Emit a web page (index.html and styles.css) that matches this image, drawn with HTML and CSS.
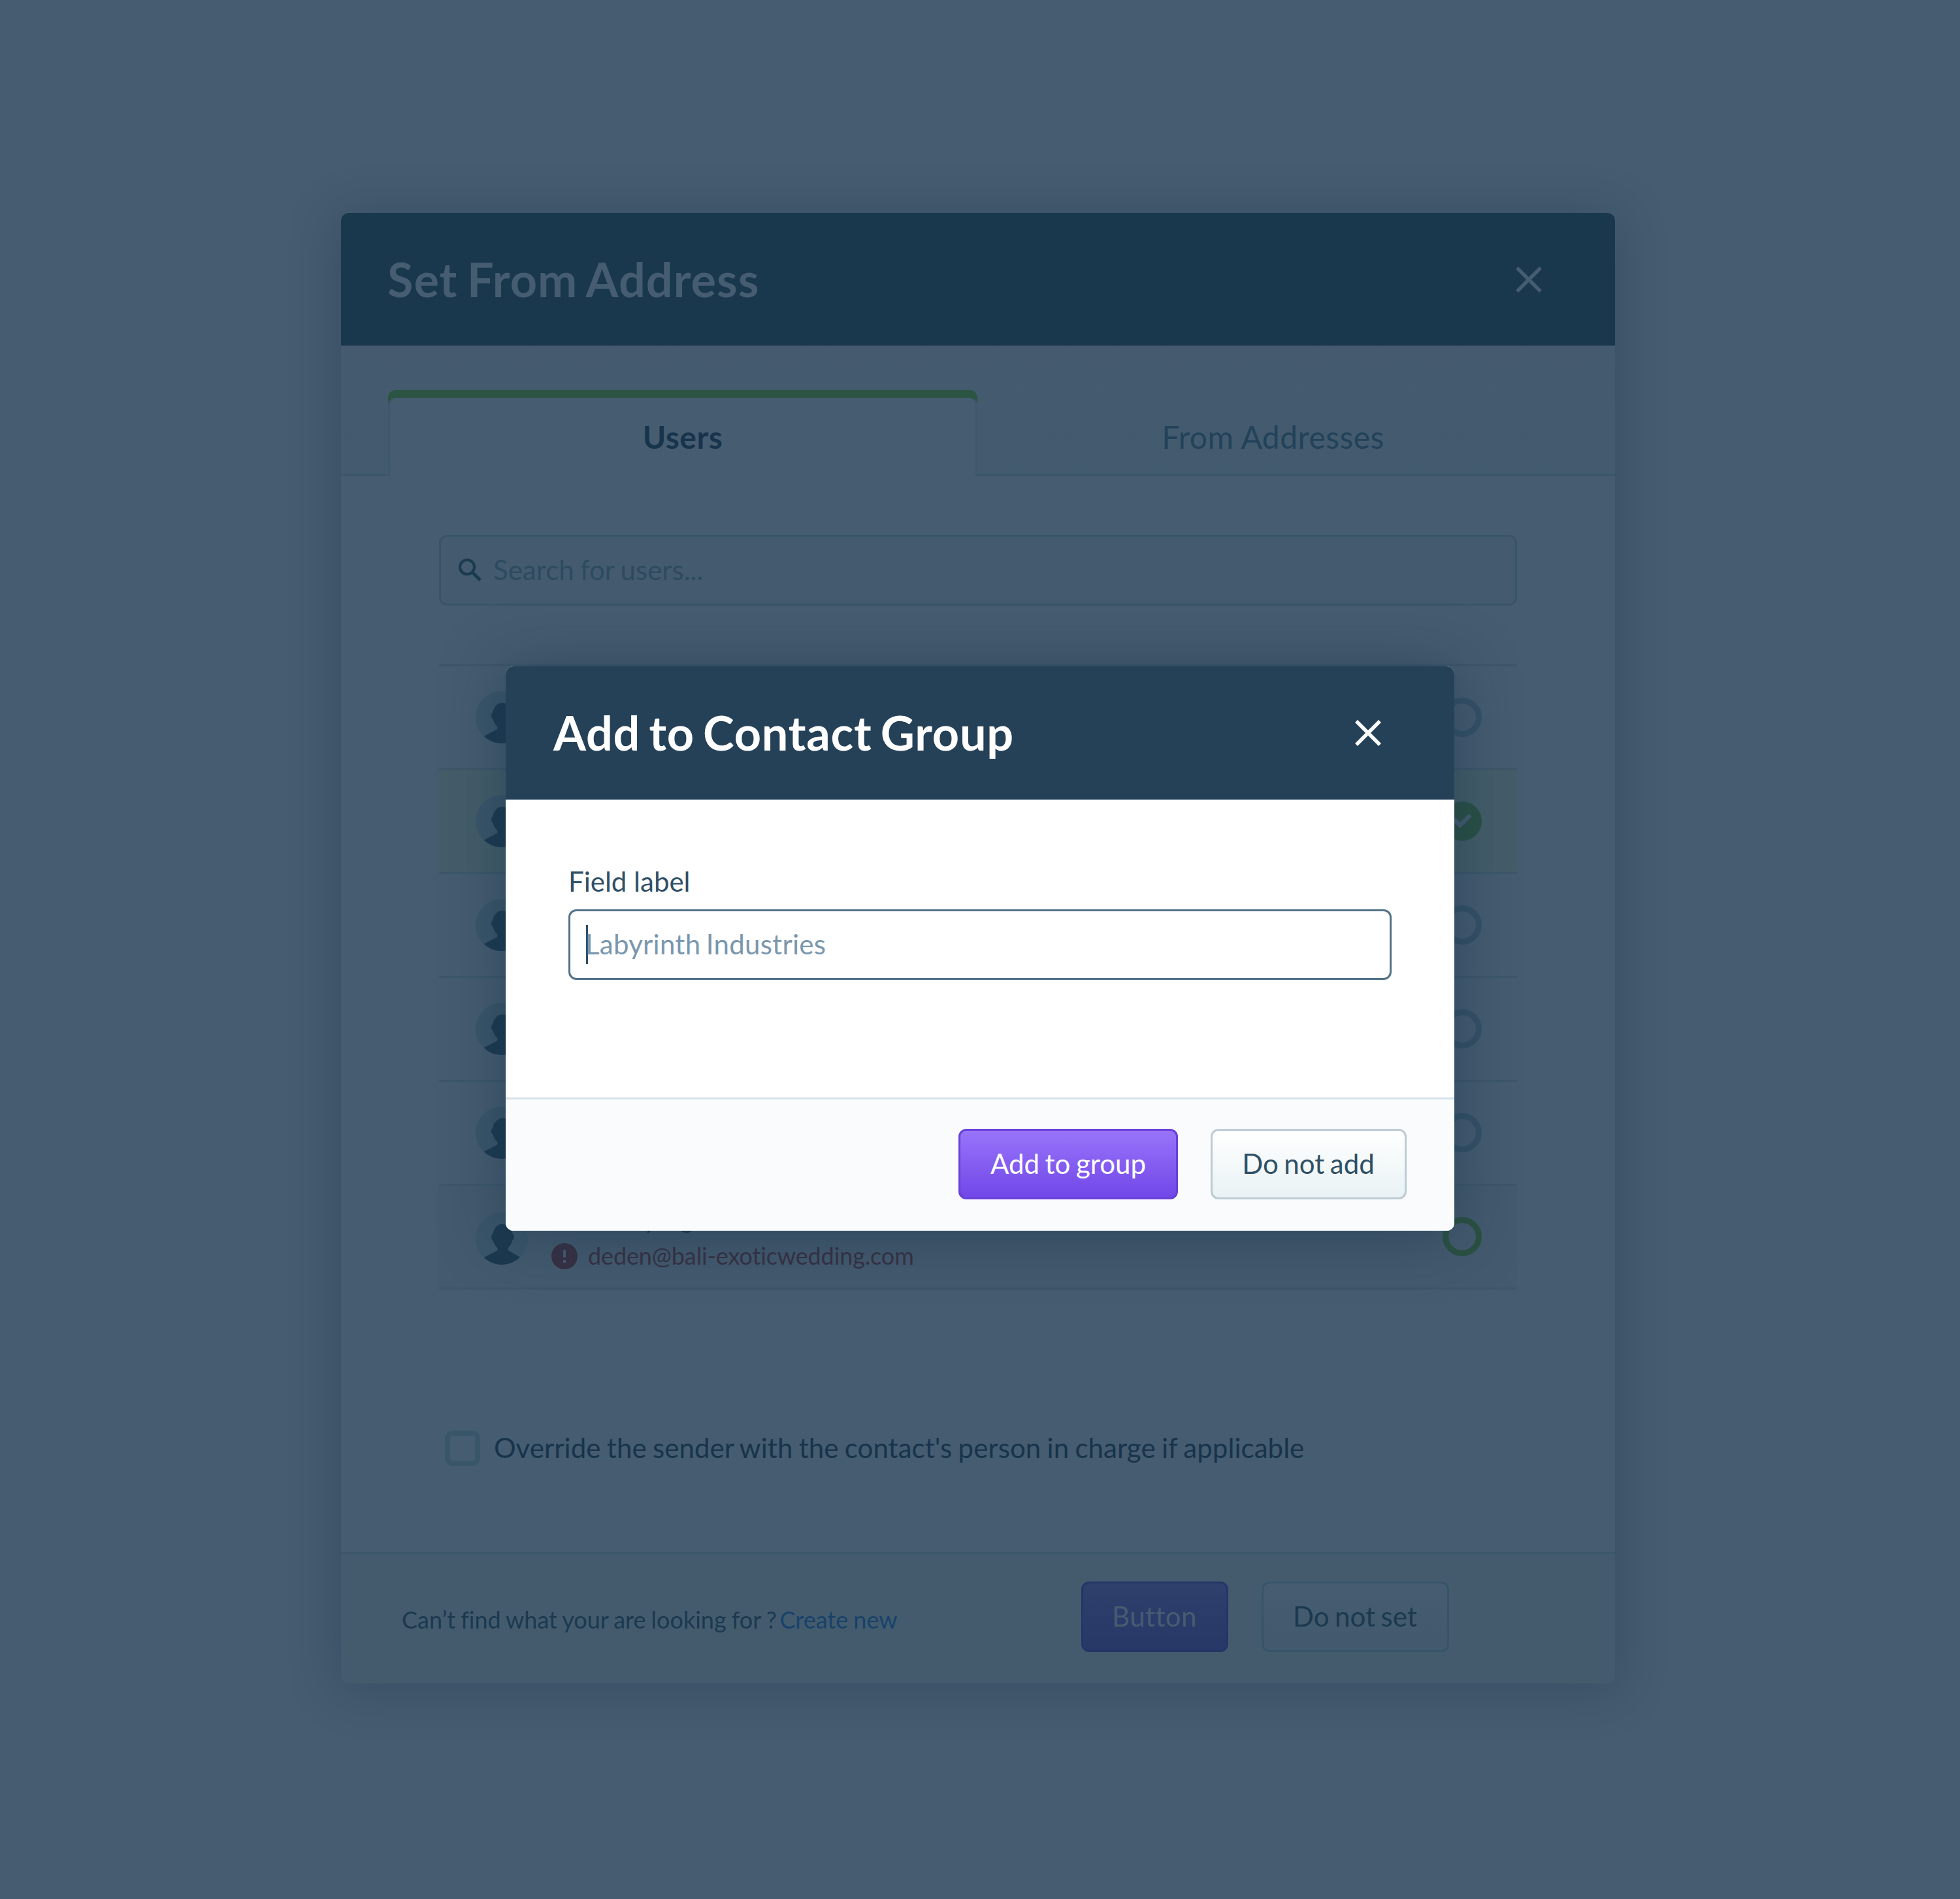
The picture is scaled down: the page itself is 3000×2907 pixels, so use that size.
FILE: index.html
```html
<!DOCTYPE html>
<html lang="en">
<head>
<meta charset="utf-8">
<title>Add to Contact Group</title>
<link rel="stylesheet" href="styles.css">
</head>
<body>
<svg width="0" height="0" class="defs">
  <symbol id="avatar" viewBox="0 0 80 80">
    <clipPath id="disc"><circle cx="40" cy="40" r="40"/></clipPath>
    <circle cx="40" cy="40" r="40" fill="#3b566a"/>
    <path clip-path="url(#disc)" fill="#1b394f" d="M41 18C33 18 28 24 26.500 32C25.500 34 24 34 24 37C24 40 25 42 26.500 43C28 48 30 51 33 54C34 55.500 34 58 32 59L12.500 69V82H69V69L51.500 59C49 58 49 55.500 50 54C53 51 55 48 56 43C58 42 59 40 59 37C59 34 57.500 34 56.500 32C55 24 49 18 41 18Z"/>
  </symbol>
  <symbol id="close" viewBox="0 0 40 40">
    <path d="M2 2L38 38M38 2L2 38" fill="none" stroke="currentColor" stroke-width="5.500"/>
  </symbol>
</svg>

<section class="modal users">
  <header class="modal-head">
    <h2>Set From Address</h2>
    <svg class="close"><use href="#close"/></svg>
  </header>
  <nav class="tabs">
    <div class="tab active"><div class="tab-in">Users</div></div>
    <div class="tab">From Addresses</div>
  </nav>
  <div class="users-body">
    <div class="search">
      <svg class="glass" viewBox="0 0 35 35"><circle cx="13" cy="13" r="11" fill="none" stroke="#1b394f" stroke-width="4.200"/><path d="M21.500 21.500L33 33" stroke="#1b394f" stroke-width="5"/></svg>
      <span>Search for users...</span>
    </div>
    <ul class="list">
      <li><svg class="avatar"><use href="#avatar"/></svg><i class="radio"></i></li>
      <li class="selected"><svg class="avatar"><use href="#avatar"/></svg>
        <svg class="checked" viewBox="0 0 60 60"><circle cx="30" cy="30" r="30" fill="#2a5043"/><path d="M17.500 27.300L26.700 36.500L42.500 20.700" fill="none" stroke="#465c70" stroke-width="6.500"/></svg></li>
      <li><svg class="avatar"><use href="#avatar"/></svg><i class="radio"></i></li>
      <li><svg class="avatar"><use href="#avatar"/></svg><i class="radio"></i></li>
      <li><svg class="avatar"><use href="#avatar"/></svg><i class="radio"></i></li>
      <li class="last"><svg class="avatar"><use href="#avatar"/></svg>
        <div class="person">
          <div class="name">Deden Jying</div>
          <div class="mail">
            <svg class="alert" viewBox="0 0 40 40"><circle cx="20" cy="20" r="20" fill="#383043"/><path d="M18 10H22V22H18ZM18 26H22V30H18Z" fill="#465c70"/></svg>
            <span>deden@bali-exoticwedding.com</span>
          </div>
        </div>
        <i class="radio green"></i></li>
    </ul>
    <div class="override"><i class="box"></i><span>Override the sender with the contact's person in charge if applicable</span></div>
  </div>
  <footer class="users-foot">
    <p>Can’t find what your are looking for ? <a>Create new</a></p>
    <div class="btn dim-primary">Button</div>
    <div class="btn dim-plain">Do not set</div>
  </footer>
</section>

<section class="modal group">
  <header class="modal-head">
    <h2>Add to Contact Group</h2>
    <svg class="close"><use href="#close"/></svg>
  </header>
  <div class="group-body">
    <div class="label">Field label</div>
    <div class="input"><i class="caret"></i><span>Labyrinth Industries</span></div>
  </div>
  <footer class="group-foot">
    <div class="btn primary">Add to group</div>
    <div class="btn plain">Do not add</div>
  </footer>
</section>
</body>
</html>
```
FILE: styles.css
```css
* { box-sizing: border-box; }
body {
  margin: 0;
  position: relative;
  width: 3000px;
  height: 2907px;
  overflow: hidden;
  background: #465c70;
  font-family: Lato, "Noto Sans", sans-serif;
  font-size: 42px;
  line-height: 50px;
  font-variant-ligatures: none;
}
.defs { position: absolute; }
h2, p, ul { margin: 0; padding: 0; }

/* Modal windows stacked over the page */
.modal {
  position: absolute;
  display: flex;
  flex-direction: column;
  border-radius: 12px;
}
.modal-head {
  display: flex;
  align-items: center;
  justify-content: space-between;
  padding: 0 112px 0 72px;
  border-radius: 12px 12px 0 0;
}
.modal-head h2 { font-size: 72px; line-height: 86px; font-weight: 700; padding-bottom: 2px; }
.users h2 { margin-left: -1px; letter-spacing: 1.05px; word-spacing: -4px; }
.group h2 { margin-left: 1px; letter-spacing: .75px; word-spacing: -5px; }
.close { width: 40px; height: 40px; }

.btn {
  flex: none;
  height: 108px;
  border: 3px solid;
  border-radius: 12px;
  text-align: center;
  line-height: 100px;
  word-spacing: -2.2px;
}

/* Users modal, dimmed */
.users {
  left: 522px;
  top: 326px;
  width: 1950px;
  height: 2251px;
  background: #465c70;
  box-shadow: 0 6px 72px rgba(23, 52, 76, .36);
}
.users .modal-head { height: 203px; background: #19374d; color: #465c70; }
.tabs {
  display: flex;
  height: 200px;
  padding: 68px 72px 0;
  background: linear-gradient(#455a6f, #435b6e);
  box-shadow: inset 0 -3px #3b566a;
}
.tab {
  width: 903px;
  padding-top: 12px;
  font-size: 48px;
  line-height: 120px;
  letter-spacing: .45px;
  text-align: center;
  color: #22425a;
}
.tab.active { width: 902px; margin-right: 1px; background: #2c5442; border-radius: 12px 12px 0 0; }
.tab-in {
  height: 120px;
  background: #465c70;
  border: solid #3f586b;
  border-width: 0 3px;
  border-radius: 12px 12px 0 0;
  font-weight: 700;
  color: #17344c;
}
.users-body { flex: 1; padding: 90px 150px 0; }
.search {
  display: flex;
  align-items: center;
  gap: 18px;
  height: 108px;
  padding: 0 27px 2px;
  border: 3px solid #37546a;
  border-radius: 12px;
  background: #445b6f;
  color: #2d4a60;
  word-spacing: -1.4px;
}
.glass { width: 35px; height: 35px; }
.list { margin-top: 90px; list-style: none; border-bottom: 3px solid #3d566a; }
.list li {
  display: flex;
  align-items: center;
  height: 159px;
  padding: 0 54px 0 56px;
  border-top: 3px solid #3d566a;
}
.list li.selected { background: #445d69; }
.list li.last { background: #445a6e; }
.last .avatar { position: relative; top: 3px; }
.avatar { width: 80px; height: 80px; flex: none; }
.radio {
  width: 60px;
  height: 60px;
  margin-left: auto;
  border: 9px solid #345167;
  border-radius: 50%;
}
.radio.green { border-color: #2b5141; }
.checked { width: 60px; height: 60px; margin-left: auto; }
.person { padding: 0 0 2px 36px; }
.name { color: #17344c; line-height: 50px; word-spacing: -9px; }
.mail { display: flex; align-items: center; gap: 16px; font-size: 36px; line-height: 44px; color: #383043; margin-top: 11px; letter-spacing: -.12px; }
.mail span { padding-bottom: 2px; }
.alert { width: 40px; height: 40px; }
.override { display: flex; align-items: center; gap: 21px; margin: 216px 0 0 9px; color: #17344c; letter-spacing: .05px; word-spacing: -1.5px; }
.override span { padding-bottom: 2px; }
.box { width: 54px; height: 54px; border: 8px solid #39556a; border-radius: 12px; }
.users-foot {
  display: flex;
  align-items: center;
  height: 201px;
  padding: 0 254.5px 6px 93px;
  border-top: 3px solid #3d566a;
  border-radius: 0 0 12px 12px;
  background: #445b6e;
}
.users-foot p { margin-right: auto; padding-top: 8px; font-size: 36px; line-height: 44px; color: #1b394f; word-spacing: -1.1px; }
.users-foot a { color: #17426a; margin-left: -3.5px; }
.dim-primary { width: 225px; margin-right: 51px; border-color: #253566; background: linear-gradient(#30406c, #273767); color: #465c70; letter-spacing: .4px; }
.dim-plain { width: 287px; border-color: #375469; background: linear-gradient(#465c70, #425a6d); color: #1b394f; }

/* Contact group modal */
.group {
  left: 774px;
  top: 1020px;
  width: 1452px;
  height: 864px;
  background: #fff;
  box-shadow: 0 6px 90px rgba(23, 52, 76, .55);
}
.group .modal-head { height: 204px; background: #254158; color: #fff; }
.group-body { flex: 1; padding: 100px 96px 0; }
.label { color: #2f5067; }
.input {
  display: flex;
  align-items: center;
  height: 108px;
  margin-top: 18px;
  padding: 0 24px;
  border: 3px solid #527289;
  border-radius: 12px;
  color: #7a97ad;
}
.input span { margin-left: -4px; padding-bottom: 2px; letter-spacing: .25px; word-spacing: -2.5px; }
.caret { width: 3px; height: 60px; background: #2f5067; }
.group-foot {
  display: flex;
  justify-content: flex-end;
  height: 204px;
  padding: 45px 73.5px 0 0;
  border-top: 3px solid #d5e1e8;
  border-radius: 0 0 12px 12px;
  background: #fafbfd;
}
.primary { width: 336px; margin-right: 49.5px; border-color: #683fd9; background: linear-gradient(#9874fa, #7147e8); color: #fff; }
.plain { width: 300px; border-color: #bccbd4; background: linear-gradient(#fff, #e9f2f4); color: #2f5067; }
```
